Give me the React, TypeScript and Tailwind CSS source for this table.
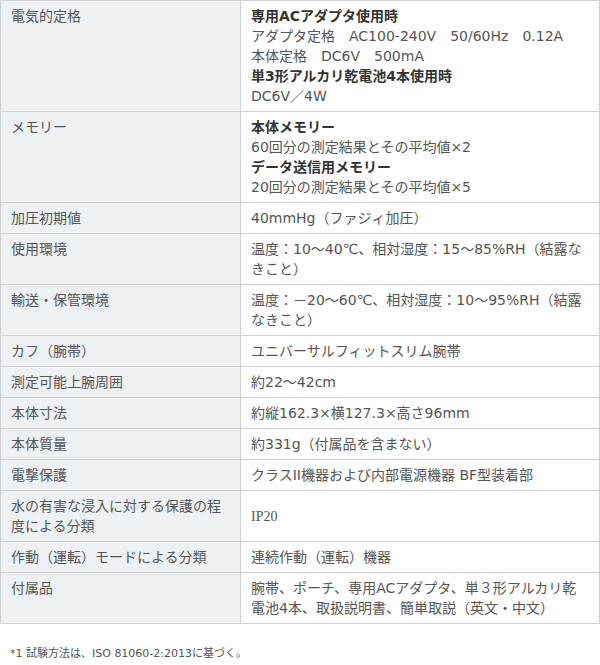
import React from "react";

type Row = { label: React.ReactNode; value: React.ReactNode };

const B = ({ children }: { children: React.ReactNode }) => (
  <span className="block font-bold text-[#333]">{children}</span>
);
const L = ({ children }: { children: React.ReactNode }) => (
  <span className="block">{children}</span>
);

const rows: Row[] = [
  {
    label: "電気的定格",
    value: (
      <>
        <B>専用ACアダプタ使用時</B>
        <L>アダプタ定格　AC100-240V　50/60Hz　0.12A</L>
        <L>本体定格　DC6V　500mA</L>
        <B>単3形アルカリ乾電池4本使用時</B>
        <L>DC6V／4W</L>
      </>
    ),
  },
  {
    label: "メモリー",
    value: (
      <>
        <B>本体メモリー</B>
        <L>60回分の測定結果とその平均値×2</L>
        <B>データ送信用メモリー</B>
        <L>20回分の測定結果とその平均値×5</L>
      </>
    ),
  },
  { label: "加圧初期値", value: "40mmHg（ファジィ加圧）" },
  {
    label: "使用環境",
    value: (
      <>
        温度：10〜40℃、相対湿度：15〜85%RH（結露な
        <br />
        きこと）
      </>
    ),
  },
  {
    label: "輸送・保管環境",
    value: (
      <>
        温度：－20〜60℃、相対湿度：10〜95%RH（結露
        <br />
        なきこと）
      </>
    ),
  },
  { label: "カフ（腕帯）", value: "ユニバーサルフィットスリム腕帯" },
  { label: "測定可能上腕周囲", value: "約22〜42cm" },
  { label: "本体寸法", value: "約縦162.3×横127.3×高さ96mm" },
  { label: "本体質量", value: "約331g（付属品を含まない）" },
  { label: "電撃保護", value: "クラスII機器および内部電源機器 BF型装着部" },
  {
    label: (
      <>
        水の有害な浸入に対する保護の程
        <br />
        度による分類
      </>
    ),
    value: <span className="font-['Liberation_Serif','Noto_Sans_CJK_JP',serif]">IP20</span>,
  },
  { label: "作動（運転）モードによる分類", value: "連続作動（運転）機器" },
  {
    label: "付属品",
    value: (
      <>
        腕帯、ポーチ、専用ACアダプタ、単３形アルカリ乾
        <br />
        電池4本、取扱説明書、簡単取説（英文・中文）
      </>
    ),
  },
];

export default function App() {
  return (
    <div className="w-[600px] h-[665px] bg-white font-['DejaVu_Sans','Noto_Sans_CJK_JP',sans-serif] text-[14px] leading-[20px] text-[#555]">
      <table className="w-[600px] border-collapse table-fixed">
        <colgroup>
          <col className="w-[240px]" />
          <col />
        </colgroup>
        <tbody>
          {rows.map((r, i) => (
            <tr key={i}>
              <th
                className={`border border-[#cfd3d6] bg-[#eef1f4] px-[10px] py-[5px] text-left font-normal whitespace-nowrap ${
                  i === 10 ? "align-middle" : "align-top"
                }`}
              >
                {r.label}
              </th>
              <td
                className={`border border-[#cfd3d6] bg-white px-[10px] py-[5px] whitespace-nowrap ${
                  i === 10 ? "align-middle" : "align-top"
                }`}
              >
                {r.value}
              </td>
            </tr>
          ))}
        </tbody>
      </table>
      <p className="mt-[22px] pl-[10px] text-[11px] leading-[16px] text-[#555]">
        *1 試験方法は、ISO 81060-2:2013に基づく。
      </p>
    </div>
  );
}
